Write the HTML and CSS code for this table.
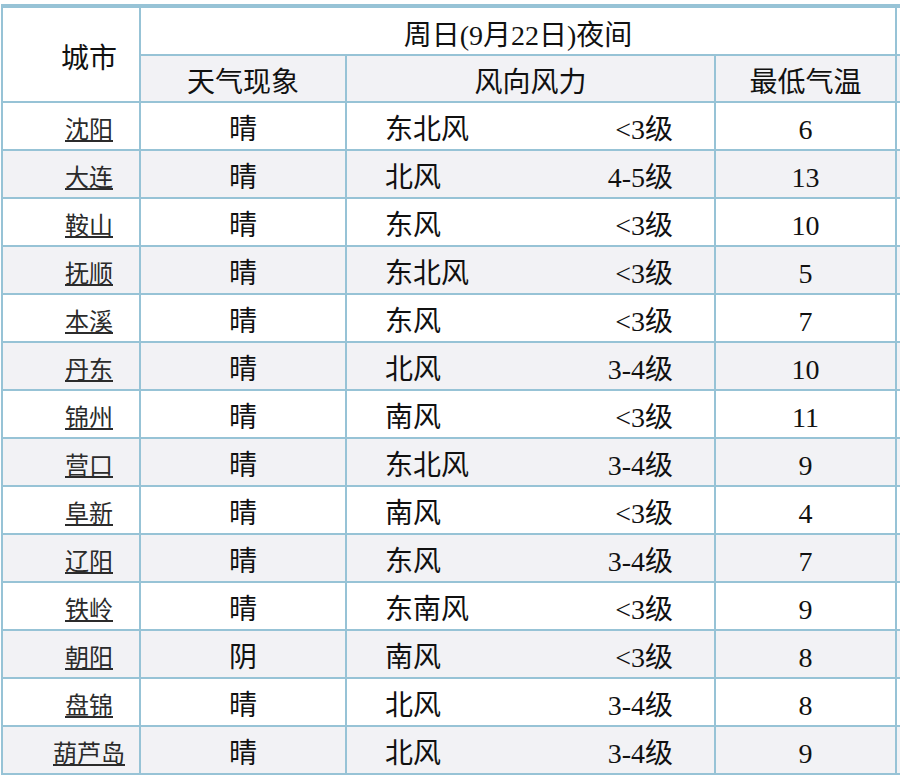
FILE: index.html
```html
<!DOCTYPE html>
<html lang="zh-CN">
<head>
<meta charset="utf-8">
<title>辽宁天气</title>
<link rel="stylesheet" href="styles.css">
</head>
<body>
<div class="wrap">
<table class="weather">
  <colgroup>
    <col class="c-city">
    <col class="c-sky">
    <col class="c-wind">
    <col class="c-temp">
    <col class="c-next">
  </colgroup>
  <thead>
    <tr class="h1">
      <th class="city-head" rowspan="2">城市</th>
      <th colspan="3">周日(9月22日)夜间</th>
      <th class="next"></th>
    </tr>
    <tr class="h2">
      <th>天气现象</th>
      <th>风向风力</th>
      <th>最低气温</th>
      <th class="next"></th>
    </tr>
  </thead>
  <tbody>
    <tr><td class="city"><a href="#">沈阳</a></td><td>晴</td><td class="wind"><span>东北风</span><span>&lt;3级</span></td><td>6</td><td></td></tr>
    <tr><td class="city"><a href="#">大连</a></td><td>晴</td><td class="wind"><span>北风</span><span>4-5级</span></td><td>13</td><td></td></tr>
    <tr><td class="city"><a href="#">鞍山</a></td><td>晴</td><td class="wind"><span>东风</span><span>&lt;3级</span></td><td>10</td><td></td></tr>
    <tr><td class="city"><a href="#">抚顺</a></td><td>晴</td><td class="wind"><span>东北风</span><span>&lt;3级</span></td><td>5</td><td></td></tr>
    <tr><td class="city"><a href="#">本溪</a></td><td>晴</td><td class="wind"><span>东风</span><span>&lt;3级</span></td><td>7</td><td></td></tr>
    <tr><td class="city"><a href="#">丹东</a></td><td>晴</td><td class="wind"><span>北风</span><span>3-4级</span></td><td>10</td><td></td></tr>
    <tr><td class="city"><a href="#">锦州</a></td><td>晴</td><td class="wind"><span>南风</span><span>&lt;3级</span></td><td>11</td><td></td></tr>
    <tr><td class="city"><a href="#">营口</a></td><td>晴</td><td class="wind"><span>东北风</span><span>3-4级</span></td><td>9</td><td></td></tr>
    <tr><td class="city"><a href="#">阜新</a></td><td>晴</td><td class="wind"><span>南风</span><span>&lt;3级</span></td><td>4</td><td></td></tr>
    <tr><td class="city"><a href="#">辽阳</a></td><td>晴</td><td class="wind"><span>东风</span><span>3-4级</span></td><td>7</td><td></td></tr>
    <tr><td class="city"><a href="#">铁岭</a></td><td>晴</td><td class="wind"><span>东南风</span><span>&lt;3级</span></td><td>9</td><td></td></tr>
    <tr><td class="city"><a href="#">朝阳</a></td><td>阴</td><td class="wind"><span>南风</span><span>&lt;3级</span></td><td>8</td><td></td></tr>
    <tr><td class="city"><a href="#">盘锦</a></td><td>晴</td><td class="wind"><span>北风</span><span>3-4级</span></td><td>8</td><td></td></tr>
    <tr><td class="city"><a href="#">葫芦岛</a></td><td>晴</td><td class="wind"><span>北风</span><span>3-4级</span></td><td>9</td><td></td></tr>
  </tbody>
</table>
</div>
</body>
</html>
```
FILE: styles.css
```css
html, body {
  margin: 0;
  padding: 0;
  background: #fff;
  overflow: hidden;
}

.wrap {
  width: 900px;
  height: 780px;
  overflow: hidden;
  padding: 4px 0 0 1px;
  box-sizing: border-box;
}

.weather {
  border-collapse: collapse;
  table-layout: fixed;
  width: 1100px;
  font-family: "Liberation Serif", "Noto Sans CJK SC", serif;
  font-size: 28px;
  line-height: 36px;
  color: #111;
}

.c-city { width: 138px; }
.c-sky { width: 206px; }
.c-wind { width: 369px; }
.c-temp { width: 181px; }
.c-next { width: 206px; }

.weather th,
.weather td {
  border: 2px solid #97c3d6;
  padding: 0;
  text-align: center;
  vertical-align: top;
  font-weight: normal;
  white-space: nowrap;
  overflow: hidden;
}

.weather .h1 th {
  border-top-width: 4px;
  padding-top: 10px;
  height: 36px;
  background: #fff;
}

.weather .h2 th {
  padding-top: 9px;
  height: 36px;
  background: #f2f2f5;
}

.weather .h1 th.city-head {
  vertical-align: middle;
  padding-top: 8px;
  padding-left: 36px;
  background: #fff;
}

.weather tbody td {
  padding-top: 9px;
  height: 37px;
}

.weather tbody tr:nth-child(even) td {
  background: #f2f2f5;
}

.weather .city {
  padding-left: 36px;
  font-size: 24px;
}

.weather .city a {
  color: #2b2b2b;
  text-decoration: underline;
  text-underline-offset: 2px;
}

.weather .wind {
  padding-left: 38px;
  padding-right: 41px;
}

.weather .wind span:first-child {
  float: left;
}

.weather .wind span:last-child {
  float: right;
}
```
